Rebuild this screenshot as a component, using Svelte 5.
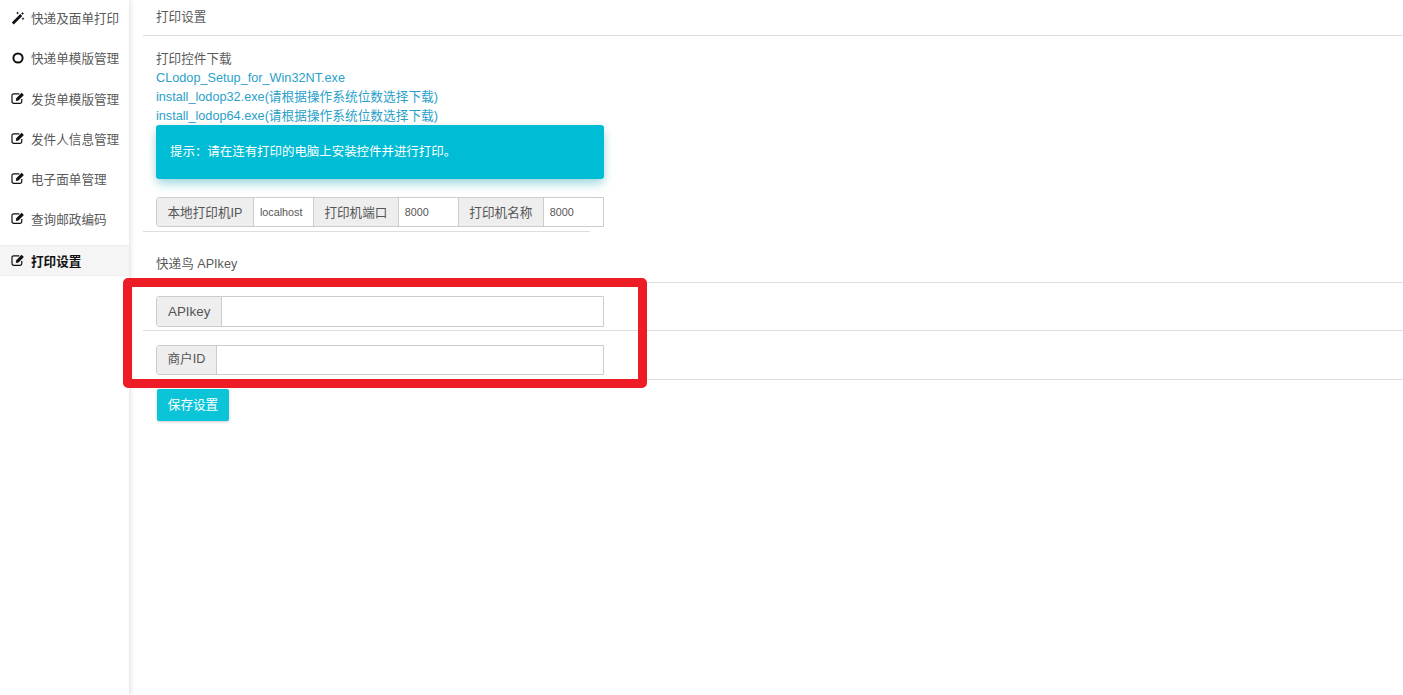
<script lang="ts">
	const menu = [
		{ label: '快递及面单打印', icon: 'magic' },
		{ label: '快递单模版管理', icon: 'circle' },
		{ label: '发货单模版管理', icon: 'edit' },
		{ label: '发件人信息管理', icon: 'edit' },
		{ label: '电子面单管理', icon: 'edit' },
		{ label: '查询邮政编码', icon: 'edit' },
		{ label: '打印设置', icon: 'edit', active: true }
	];
</script>

<div class="page">
	<aside class="sidebar">
		<ul class="menu">
			{#each menu as item}
				<li class:active={item.active}>
					{#if item.icon === 'magic'}
						<svg class="icon" viewBox="0 0 14 14" aria-hidden="true">
							<path d="M.8 11.4 9.2 3l2 2-8.4 8.4z" fill="#111" />
							<path d="M11.6.8l.5 1.1 1.1.5-1.1.5-.5 1.1-.5-1.1-1.1-.5 1.1-.5zM6.6.6l.5 1 1 .5-1 .5-.5 1-.5-1-1-.5 1-.5zM12 6.2l.5 1 1 .5-1 .5-.5 1-.5-1-1-.5 1-.5z" fill="#111" />
						</svg>
					{:else if item.icon === 'circle'}
						<svg class="icon" viewBox="0 0 14 14" aria-hidden="true">
							<circle cx="7" cy="7" r="4.6" fill="none" stroke="#111" stroke-width="2" />
						</svg>
					{:else}
						<svg class="icon" viewBox="0 0 14 14" aria-hidden="true">
							<path d="M10.8 8v2.6c0 1-.7 1.7-1.7 1.7H2.7c-1 0-1.7-.7-1.7-1.7V4.5c0-1 .7-1.7 1.7-1.7h5.6" fill="none" stroke="#111" stroke-width="1.2" />
							<path d="M4.8 9.9l.5-2.7 5.3-5.4 2.3 2.3-5.4 5.3z" fill="#111" />
						</svg>
					{/if}
					<span>{item.label}</span>
				</li>
			{/each}
		</ul>
	</aside>

	<main class="content">
		<h5 class="title">打印设置</h5>
		<section class="downloads">
			<div>打印控件下载</div>
			<a href="#clodop">CLodop_Setup_for_Win32NT.exe</a>
			<a href="#lodop32">install_lodop32.exe(请根据操作系统位数选择下载)</a>
			<a href="#lodop64">install_lodop64.exe(请根据操作系统位数选择下载)</a>
		</section>
		<div class="alert">提示：请在连有打印的电脑上安装控件并进行打印。</div>

		<div class="group printer">
			<span class="addon">本地打印机IP</span>
			<input class="w-ip" value="localhost" />
			<span class="addon">打印机端口</span>
			<input class="w-port" value="8000" />
			<span class="addon">打印机名称</span>
			<input class="w-name" value="8000" />
		</div>
		<hr class="short" />

		<h5 class="subtitle">快递鸟 APIkey</h5>
		<hr />
		<div class="group row-a">
			<span class="addon">APIkey</span>
			<input class="grow" />
		</div>
		<hr />
		<div class="group row-b">
			<span class="addon">商户ID</span>
			<input class="grow" />
		</div>
		<hr />
		<button class="save">保存设置</button>
	</main>

	<div class="mark"></div>
</div>

<style>
	:global(body) {
		margin: 0;
		background: #fff;
	}

	.page {
		position: relative;
		display: flex;
		height: 695px;
		overflow: hidden;
		font-family: 'Liberation Sans', 'Noto Sans CJK SC', sans-serif;
		font-size: 12.6px;
		color: #5a5a5a;
	}

	.sidebar {
		flex: 0 0 129px;
		box-shadow: 2px 0 4px rgba(0, 0, 0, 0.1);
	}

	.menu {
		list-style: none;
		margin: 0;
		padding: 0;
	}

	.menu li {
		display: flex;
		align-items: center;
		gap: 6px;
		height: 30px;
		margin-top: 10.05px;
		padding-left: 11px;
		white-space: nowrap;
	}

	.menu li:first-child {
		margin-top: 2.95px;
	}

	.menu li.active {
		margin-top: 11.8px;
		background: #f5f5f5;
		border-top: 1px solid #eee;
		border-bottom: 1px solid #eee;
		box-sizing: border-box;
		height: 31px;
		color: #111;
		font-weight: 700;
	}

	.icon {
		width: 14px;
		height: 14px;
		flex: none;
	}

	.content {
		flex: 1;
		min-width: 0;
		padding-left: 14px;
	}

	.title {
		margin: 0;
		height: 27px;
		padding: 8px 0 0 13px;
		font-size: 12.6px;
		font-weight: 400;
		line-height: 18px;
		border-bottom: 1px solid #ddd;
	}

	.downloads {
		margin-top: 14px;
		padding-left: 13px;
		line-height: 19px;
		font-size: 12.7px;
	}

	.downloads div {
		font-size: 12.6px;
	}

	.downloads a {
		display: block;
		color: #2a9fc9;
		text-decoration: none;
	}

	.alert {
		position: relative;
		width: 420px;
		height: 54px;
		margin: -1px 0 0 13px;
		padding: 0 14px;
		font-size: 12.45px;
		line-height: 54px;
		border-radius: 3px;
		background: #00bcd4;
		color: #fff;
		box-shadow: 0 6px 12px -2px rgba(0, 188, 212, 0.35), 0 3px 10px rgba(0, 0, 0, 0.12);
	}

	.group {
		display: flex;
		width: 448px;
		margin-left: 13px;
		box-sizing: border-box;
		border: 1px solid #ccc;
		border-radius: 3px 0 0 3px;
	}

	.printer {
		height: 30px;
		margin-top: 18px;
	}

	.addon {
		display: flex;
		align-items: center;
		justify-content: center;
		flex: none;
		padding: 0 10.5px 2px;
		background: #eee;
		white-space: nowrap;
		color: #555;
	}

	input {
		flex: none;
		min-width: 0;
		box-sizing: border-box;
		height: 100%;
		border: 0;
		border-left: 1px solid #ccc;
		border-right: 1px solid #ccc;
		padding: 0 6px;
		font: inherit;
		font-size: 10.8px;
		color: #555;
		background: #fff;
		outline: none;
	}

	.group input:last-child {
		border-right: 0;
	}

	.w-ip {
		width: 61px;
	}

	.w-port {
		width: 61px;
	}

	.w-name {
		flex: 1;
	}

	input.grow {
		flex: 1;
	}

	hr {
		margin: 0;
		border: 0;
		border-top: 1px solid #ddd;
	}

	.short {
		width: 447px;
		margin-top: 4px;
	}

	.subtitle {
		margin: 0;
		padding: 23px 0 9px 13px;
		font-size: 12.6px;
		font-weight: 400;
		line-height: 18px;
	}

	.row-a {
		height: 31px;
		margin-top: 13px;
		margin-bottom: 3px;
	}

	.row-a .addon {
		padding: 0 11px 1px;
		font-size: 13.4px;
	}

	.row-b {
		height: 30px;
		margin-top: 14px;
		margin-bottom: 4px;
	}

	.row-b .addon {
		padding-bottom: 5px;
	}

	.save {
		display: block;
		width: 72px;
		height: 32px;
		margin: 9px 0 0 14px;
		padding: 0 0 4px;
		border: 0;
		border-radius: 2px;
		background: #0bc4d8;
		color: #fff;
		font: inherit;
		box-shadow: 0 1px 3px rgba(0, 0, 0, 0.2);
	}

	/* red annotation drawn over the form */
	.mark {
		position: absolute;
		left: 123px;
		top: 278px;
		width: 524px;
		height: 110px;
		box-sizing: border-box;
		border: 9px solid #ee1c25;
		border-radius: 5px;
	}
</style>
